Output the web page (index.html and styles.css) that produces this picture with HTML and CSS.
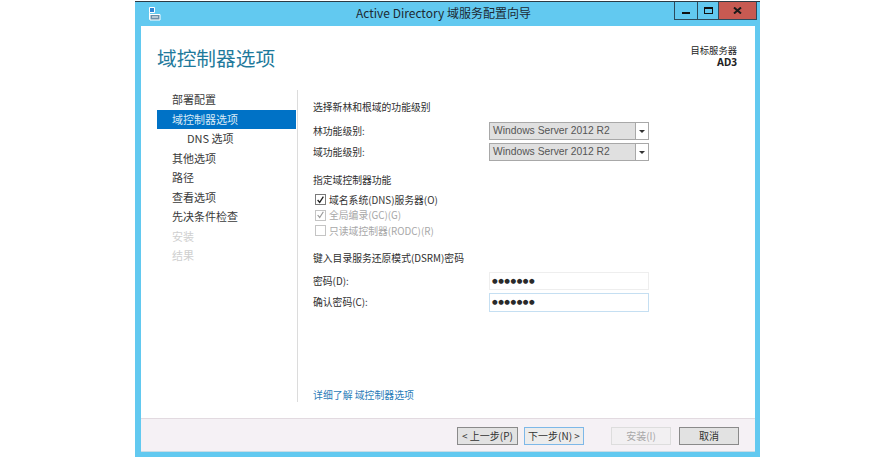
FILE: index.html
```html
<!DOCTYPE html>
<html lang="zh-CN">
<head>
<meta charset="utf-8">
<title>Active Directory 域服务配置向导</title>
<link rel="stylesheet" href="styles.css">
</head>
<body>
<div class="window">
  <div class="titlebar">
    <svg class="app-icon" width="13" height="14" viewBox="0 0 13 14"><path d="M1.5 .5h5v5h-5z" fill="#2f86d6" stroke="#fff"/><path d="M1.5 5.500v7" stroke="#fff"/><path d="M2 7.500h10v5.500H2z" fill="#6d8fa8" stroke="#fff"/><path d="M4 10h6" stroke="#fff"/></svg>
    <div class="title">Active Directory 域服务配置向导</div>
    <div class="controls">
      <div class="ctl ctl-min"><span class="glyph-min"></span></div>
      <div class="ctl ctl-max"><span class="glyph-max"></span></div>
      <div class="ctl ctl-close">
        <svg width="9" height="7" viewBox="0 0 9 7"><path d="M1 0.500l7 6M8 0.500l-7 6" stroke="#1a1a1a" stroke-width="2"/></svg>
      </div>
    </div>
  </div>
  <div class="client">
    <div class="header">
      <h1 class="page-title">域控制器选项</h1>
      <div class="target">
        <div>目标服务器</div>
        <div class="target-name">AD3</div>
      </div>
    </div>
    <div class="body">
      <nav class="nav">
        <div class="nav-item">部署配置</div>
        <div class="nav-item nav-active">域控制器选项</div>
        <div class="nav-item nav-sub">DNS 选项</div>
        <div class="nav-item">其他选项</div>
        <div class="nav-item">路径</div>
        <div class="nav-item">查看选项</div>
        <div class="nav-item">先决条件检查</div>
        <div class="nav-item nav-off">安装</div>
        <div class="nav-item nav-off">结果</div>
      </nav>
      <main class="main">
        <div class="section-title first">选择新林和根域的功能级别</div>
        <div class="field field-combo">
          <span class="label">林功能级别:</span>
          <div class="combo"><span class="combo-value">Windows Server 2012 R2</span><span class="combo-arrow"></span></div>
        </div>
        <div class="field field-combo second">
          <span class="label">域功能级别:</span>
          <div class="combo"><span class="combo-value">Windows Server 2012 R2</span><span class="combo-arrow"></span></div>
        </div>
        <div class="section-title caps">指定域控制器功能</div>
        <div class="check">
          <span class="box"><svg width="10" height="10" viewBox="0 0 11 11"><path d="M2 5.500l2.500 3L9 1.500" fill="none" stroke="#222" stroke-width="1.600"/></svg></span>
          <span>域名系统(DNS)服务器(O)</span>
        </div>
        <div class="check check-off">
          <span class="box"><svg width="10" height="10" viewBox="0 0 11 11"><path d="M2 5.500l2.500 3L9 1.500" fill="none" stroke="#999" stroke-width="1.400"/></svg></span>
          <span>全局编录(GC)(G)</span>
        </div>
        <div class="check check-off">
          <span class="box"></span>
          <span>只读域控制器(RODC)(R)</span>
        </div>
        <div class="section-title dsrm">键入目录服务还原模式(DSRM)密码</div>
        <div class="field field-pass">
          <span class="label">密码(D):</span>
          <div class="input">●●●●●●●</div>
        </div>
        <div class="field field-pass second-pass">
          <span class="label">确认密码(C):</span>
          <div class="input input-focus">●●●●●●●</div>
        </div>
        <a class="link">详细了解 域控制器选项</a>
      </main>
    </div>
    <div class="footer">
      <button class="btn btn-prev">&lt; 上一步(P)</button>
      <button class="btn btn-next">下一步(N) &gt;</button>
      <button class="btn btn-install">安装(I)</button>
      <button class="btn btn-cancel">取消</button>
    </div>
  </div>
</div>
</body>
</html>
```
FILE: styles.css
```css
* { box-sizing: border-box; }
html, body { margin: 0; padding: 0; background: #fff; }
body {
  width: 893px;
  height: 457px;
  overflow: hidden;
  font-family: "Noto Sans CJK SC", "Noto Sans", sans-serif;
  font-size: 11px;
  color: #2e2e2e;
}
.window {
  width: 625px;
  height: 456px;
  margin: 1px 0 0 135px;
  background: #62c9f0;
  border-top: 1px solid #2c3a44;
  padding: 0 5px 5px 6px;
  display: flex;
  flex-direction: column;
}
.titlebar {
  height: 24px;
  flex: none;
  display: flex;
  align-items: flex-start;
}
.app-icon { margin: 5px 0 0 7px; flex: none; }
.title {
  margin: 2px 0 0 195px;
  font-size: 12px;
  line-height: 18px;
  color: #1c2a33;
  white-space: nowrap;
}
.controls {
  margin-left: auto;
  margin-right: -2px;
  display: flex;
  height: 18px;
  border: 1px solid #2c4a5c;
  border-top: 0;
}
.ctl { display: flex; align-items: center; justify-content: center; height: 100%; }
.ctl-min { width: 23px; border-right: 1px solid #2c4a5c; }
.ctl-max { width: 21px; border-right: 1px solid #2c4a5c; }
.ctl-close { width: 37px; background: #c75a52; }
.glyph-min { width: 8px; height: 2px; background: #111; margin-top: 5px; }
.glyph-max { width: 9px; height: 7px; border: 1px solid #111; border-top-width: 2px; }
.client {
  flex: 1;
  min-height: 0;
  background: #fff;
  display: flex;
  flex-direction: column;
  border-bottom: 1px solid #c9dce6;
}
.header {
  height: 64px;
  flex: none;
  display: flex;
  justify-content: space-between;
  padding: 17px 18px 0 16px;
}
.page-title {
  margin: 0;
  font-size: 19.700px;
  font-weight: 400;
  line-height: 30px;
  color: #1f7a9c;
}
.target { text-align: right; font-size: 9.300px; line-height: 12px; padding-top: 1px; color: #222; }
.target-name { font-weight: 700; font-size: 10px; font-family: "Noto Sans", sans-serif; }
.body { flex: 1; min-height: 0; display: flex; }
.nav {
  width: 157px;
  flex: none;
  height: 312px;
  padding: 0 0 0 16px;
  border-right: 1px solid #dcdcdc;
}
.nav-item {
  height: 19.500px;
  line-height: 19.500px;
  padding-left: 15px;
  font-size: 11px;
  color: #3a3a3a;
  white-space: nowrap;
}
.nav-active { background: #0072c6; color: #d8eaf7; margin-right: 1px; }
.nav-sub { padding-left: 30px; }
.nav-off { color: #cfcfcf; }
.main {
  flex: 1;
  padding: 10px 0 0 15px;
  display: flex;
  flex-direction: column;
  align-items: flex-start;
  height: 312px;
}
.section-title { line-height: 14px; font-size: 9.800px; color: #2e2e2e; white-space: nowrap; }
.first { margin-bottom: 8px; }
.caps { margin-top: 12px; }
.dsrm { margin-top: 12px; }
.field { display: flex; width: 336px; align-items: center; }
.label { width: 176px; flex: none; font-size: 9.800px; color: #2e2e2e; }
.field-combo { height: 18px; }
.second { margin-top: 3px; }
.combo {
  width: 160px;
  height: 18px;
  display: flex;
  background: #e0e0e0;
  border: 1px solid #a8a8a8;
}
.combo-value {
  flex: 1;
  line-height: 16px;
  padding-left: 3px;
  font-family: "Liberation Sans", sans-serif;
  font-size: 10.300px;
  color: #555;
  white-space: nowrap;
}
.combo-arrow {
  width: 13px;
  flex: none;
  border-left: 1px solid #a8a8a8;
  background: #fff;
  display: flex;
  align-items: center;
  justify-content: center;
}
.combo-arrow::after {
  content: "";
  border-left: 3px solid transparent;
  border-right: 3px solid transparent;
  border-top: 3px solid #333;
}
.check { display: flex; align-items: center; height: 15.500px; color: #333; font-size: 9.800px; white-space: nowrap; }
.section-title.caps + .check { margin-top: 5px; }
.box {
  width: 11px;
  height: 11px;
  flex: none;
  margin: 0 3px 0 2px;
  border: 1px solid #7a7a7a;
  background: #fff;
  display: flex;
  align-items: center;
  justify-content: center;
}
.check-off { color: #a8a8a8; }
.check-off .box { border-color: #c4c4c4; }
.field-pass { height: 18px; margin-top: 7px; }
.second-pass { margin-top: 3px; height: 19px; }
.input {
  width: 160px;
  height: 100%;
  border: 1px solid #eeeeee;
  font-family: "DejaVu Sans", sans-serif;
  font-size: 6.500px;
  letter-spacing: 0.500px;
  line-height: 16px;
  padding-left: 2px;
  color: #2a2a2a;
}
.input-focus { border-color: #c5dff2; }
.link { margin-top: auto; margin-bottom: 0; font-size: 9.900px; line-height: 14px; color: #2a7cb8; }
.footer {
  height: 33px;
  flex: none;
  margin-top: auto;
  background: #f5f1f5;
  border-top: 1px solid #e2dae0;
  display: flex;
  align-items: flex-start;
  padding: 8px 16px 0 0;
}
.btn {
  height: 18px;
  width: 60px;
  padding: 0;
  font: inherit;
  font-size: 10px;
  line-height: 16px;
  background: #e2e2e2;
  color: #333;
  border: 1px solid #8a8a8a;
  border-radius: 0;
}
.btn-prev { margin-left: auto; width: 61px; }
.btn-next { margin-left: 6px; background: #ececec; border-color: #7db8e8; }
.btn-install { margin-left: 27px; background: #f2f0f2; border-color: #dddddd; color: #a8a8a8; }
.btn-cancel { margin-left: 8px; }
```
